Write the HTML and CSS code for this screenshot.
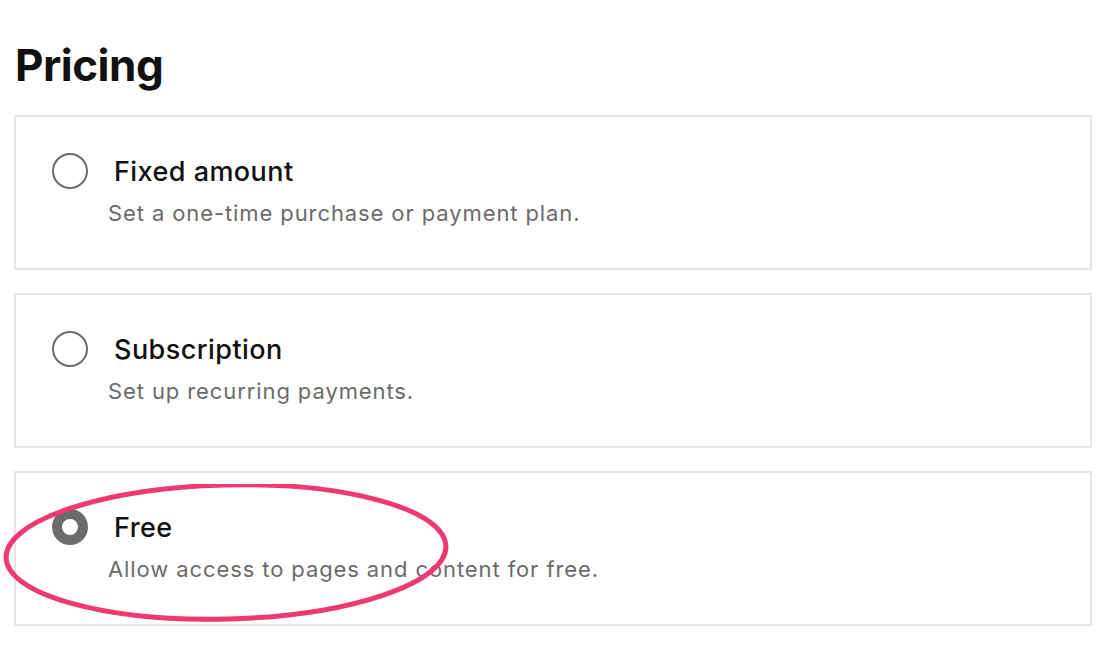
FILE: index.html
```html
<!DOCTYPE html>
<html>
<head>
    <title>Pricing</title>
    <link rel="stylesheet" href="styles.css">
</head>
<body>
<div class="page">
    <h1>Pricing</h1>
    <div class="options">
        <label class="option">
            <div class="option-head">
                <span class="radio"></span>
                <span class="option-title">Fixed amount</span>
            </div>
            <div class="option-desc">Set a one-time purchase or payment plan.</div>
        </label>
        <label class="option">
            <div class="option-head">
                <span class="radio"></span>
                <span class="option-title">Subscription</span>
            </div>
            <div class="option-desc">Set up recurring payments.</div>
        </label>
        <label class="option">
            <div class="option-head">
                <span class="radio checked"></span>
                <span class="option-title">Free</span>
            </div>
            <div class="option-desc">Allow access to pages and content for free.</div>
            <svg class="highlight" width="460" height="150" viewBox="0 0 460 150">
                <ellipse cx="224" cy="68" rx="220" ry="67" transform="rotate(-1.5 224 68)" fill="none" stroke="#ee3a70" stroke-width="5"/>
            </svg>
        </label>
    </div>
</div>
</body>
</html>
```

FILE: styles.css
```css
body {
    margin: 0;
    background: #fff;
    font-family: Inter, "Noto Sans", sans-serif;
    color: #111;
}
.page {
    padding: 40px 14px 0 14px;
}
h1 {
    margin: 0 0 0 1px;
    font-size: 44px;
    font-weight: 700;
    line-height: 50px;
    letter-spacing: -0.5px;
}
.options {
    margin-top: 25px;
    width: 1078px;
    display: flex;
    flex-direction: column;
    gap: 23px;
}
.option {
    position: relative;
    display: block;
    height: 155px;
    box-sizing: border-box;
    border: 2px solid #e6e6e6;
    padding: 36px 36px 0 36px;
}
.option-head {
    display: flex;
    align-items: center;
    gap: 26px;
}
.radio {
    width: 36px;
    height: 36px;
    box-sizing: border-box;
    border: 2px solid #6b6b6b;
    border-radius: 50%;
    flex-shrink: 0;
}
.radio.checked {
    border: 10px solid #6b6b6b;
}
.option-title {
    font-size: 27px;
    font-weight: 500;
    letter-spacing: 0.45px;
    color: #111;
}
.option-desc {
    margin: 10px 0 0 56px;
    font-size: 22px;
    line-height: 28px;
    letter-spacing: 0.9px;
    color: #6b6b6b;
}
.highlight {
    position: absolute;
    left: -14px;
    top: 11px;
    pointer-events: none;
}
```
